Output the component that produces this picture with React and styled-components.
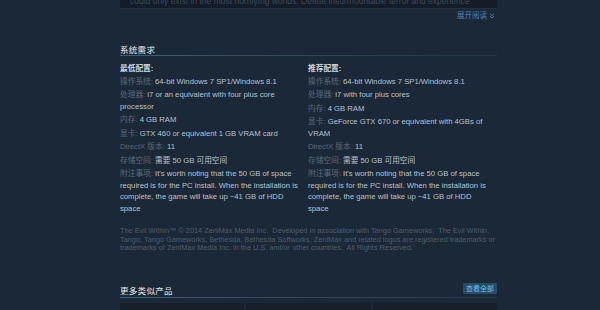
import React from "react";
import styled, { createGlobalStyle } from "styled-components";

const Global = createGlobalStyle`
  html, body { margin: 0; padding: 0; background: #1b2838; }
  body {
    font-family: "Liberation Sans", Arial, "Noto Sans CJK SC", sans-serif;
    width: 600px; height: 310px; overflow: hidden;
  }
`;

const Page = styled.div`
  width: 377px;
  margin-left: 120px;
`;

const DescFade = styled.div`
  height: 8px;
  background: #131c27;
  overflow: hidden;
  display: flex;
  align-items: flex-end;
  padding-left: 10px;
  border-bottom: 1px solid #203041;
`;

const DescText = styled.div`
  font-size: 8.5px;
  line-height: 14px;
  color: #3d4a59;
  white-space: nowrap;
`;

const ReadMore = styled.div`
  display: flex;
  justify-content: flex-end;
  align-items: center;
  gap: 2px;
  margin-top: 2px;
  font-size: 7.5px;
  line-height: 10px;
  color: #4d84b4;
  padding-right: 2px;
`;

const SectionHeader = styled.div`
  display: flex;
  justify-content: space-between;
  align-items: flex-end;
  padding-bottom: ${(p) => p.$pb || 1}px;
  margin-top: ${(p) => p.$mt}px;
  background: linear-gradient(to right, #33617f, #2a475e 50%, #24394c) bottom / 100% 1px no-repeat;
`;

const SectionTitle = styled.div`
  font-size: 8.5px;
  line-height: 10px;
  color: #e6ebef;
  letter-spacing: 0.3px;
`;

const ViewAll = styled.div`
  height: 11px;
  line-height: 11px;
  margin-bottom: 2px;
  padding: 0 3px;
  font-size: 7px;
  color: #67c1f5;
  background: #284b66;
  border-radius: 1px;
`;

const Columns = styled.div`
  display: grid;
  grid-template-columns: 188px 189px;
  margin-top: 7px;
`;

const Col = styled.div`
  font-size: 7.7px;
  line-height: 11.5px;
  color: #b7c3cd;
`;

const ColHead = styled.div`
  font-weight: bold;
  color: #ccd6de;
  margin-bottom: 1px;
`;

const ReqList = styled.ul`
  list-style: none;
  margin: 0;
  padding: 0;
`;

const ReqItem = styled.li`
  margin-bottom: 2px;
`;

const Label = styled.span`
  color: #5c6a77;
`;

const Copyright = styled.div`
  margin-top: 11px;
  font-size: 7.35px;
  line-height: 8.5px;
  color: #4f5d6b;
`;

const Capsules = styled.div`
  display: grid;
  grid-template-columns: repeat(3, 1fr);
  gap: 2px;
  margin-top: 5px;
`;

const Capsule = styled.div`
  height: 20px;
  background: #161f2a;
`;

const Chevron = () => (
  <svg width="6" height="6" viewBox="0 0 6 6" fill="none" stroke="#4d84b4" strokeWidth="0.9">
    <path d="M1 0.8 L3 2.6 L5 0.8" />
    <path d="M1 3.2 L3 5 L5 3.2" />
  </svg>
);

const minimum = [
  ["操作系统:", "64-bit Windows 7 SP1/Windows 8.1"],
  ["处理器:", "i7 or an equivalent with four plus core processor"],
  ["内存:", "4 GB RAM"],
  ["显卡:", "GTX 460 or equivalent 1 GB VRAM card"],
  ["DirectX 版本:", "11"],
  ["存储空间:", "需要 50 GB 可用空间"],
];

const recommended = [
  ["操作系统:", "64-bit Windows 7 SP1/Windows 8.1"],
  ["处理器:", "i7 with four plus cores"],
  ["内存:", "4 GB RAM"],
  ["显卡:", "GeForce GTX 670 or equivalent with 4GBs of VRAM"],
  ["DirectX 版本:", "11"],
  ["存储空间:", "需要 50 GB 可用空间"],
];

const Note = () => (
  <ReqItem>
    <Label>附注事项:</Label> It's worth noting that the 50 GB of space required is for the PC
    install. When the installation is complete, the game will take up ~41 GB of HDD
    <br />
    space
  </ReqItem>
);

const ReqColumn = ({ title, rows }) => (
  <Col>
    <ColHead>{title}</ColHead>
    <ReqList>
      {rows.map(([l, v]) => (
        <ReqItem key={l}>
          <Label>{l}</Label> {v}
        </ReqItem>
      ))}
      <Note />
    </ReqList>
  </Col>
);

export default function App() {
  return (
    <>
      <Global />
      <Page>
        <DescFade>
          <DescText>
            could only exist in the most horrifying worlds. Defeat insurmountable terror and experience
          </DescText>
        </DescFade>
        <ReadMore>
          展开阅读 <Chevron />
        </ReadMore>
        <SectionHeader $mt={24}>
          <SectionTitle>系统需求</SectionTitle>
        </SectionHeader>
        <Columns>
          <ReqColumn title="最低配置:" rows={minimum} />
          <ReqColumn title="推荐配置:" rows={recommended} />
        </Columns>
        <Copyright>
          The Evil Within™ © 2014 ZeniMax Media Inc.&nbsp; Developed in association with Tango
          Gameworks.&nbsp; The Evil Within, Tango, Tango Gameworks, Bethesda, Bethesda Softworks,
          ZeniMax and related logos are registered trademarks or trademarks of ZeniMax Media Inc. in
          the U.S. and/or other countries.&nbsp; All Rights Reserved.
        </Copyright>
        <SectionHeader $mt={30} $pb={2}>
          <SectionTitle>更多类似产品</SectionTitle>
          <ViewAll>查看全部</ViewAll>
        </SectionHeader>
        <Capsules>
          <Capsule />
          <Capsule />
          <Capsule />
        </Capsules>
      </Page>
    </>
  );
}
